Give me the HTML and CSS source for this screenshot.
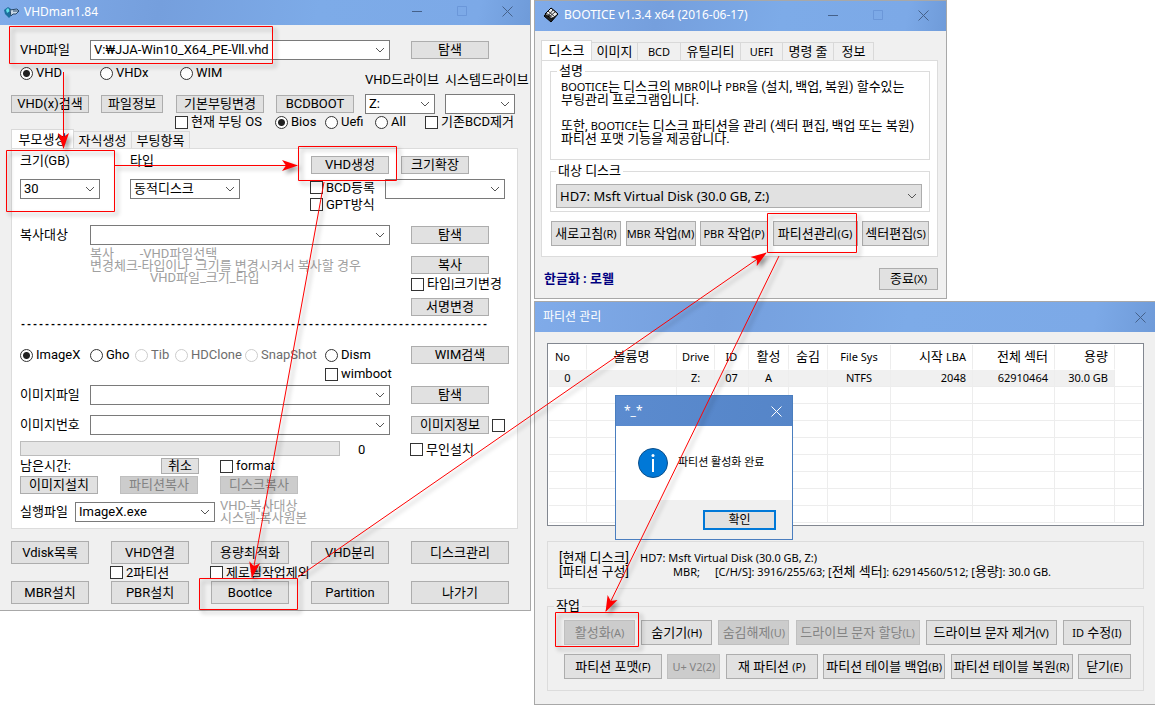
FILE: index.html
```html
<!DOCTYPE html>
<html lang="ko">
<head>
<meta charset="utf-8">
<title>VHDman1.84</title>
<link rel="stylesheet" href="styles.css">
</head>
<body>
<main class="desktop">

<section class="window vhdman">
  <header class="titlebar">
    <svg class="app-icon" width="16" height="14" viewBox="0 0 16 14"><path d="M0 5 4 2l3 2 1 6-3 3-4-4z" fill="#1d6f9e"/><path d="m2 5 2-2 2 3-3 2z" fill="#5fe0e8"/><path d="m6 5 7-1 2 2-3 3-3 0-2 2z" fill="#c9d9e8" stroke="#27486b"/><path d="m9 6 5 0" stroke="#27486b"/></svg>
    <h1>VHDman1.84</h1>
    <div class="win-controls">
      <button aria-label="최소화"><svg width="11" height="11"><path d="M0 5.500h10"/></svg></button>
      <button aria-label="최대화" disabled><svg width="11" height="11"><path d="M.5.5h9v9h-9z"/></svg></button>
      <button aria-label="닫기"><svg width="11" height="11"><path d="m.5.5 10 10m0-10-10 10"/></svg></button>
    </div>
  </header>

  <div class="vhd-body">
    <div class="row row-file">
      <label for="vhdfile">VHD파일</label>
      <select id="vhdfile" class="w300"><option>V:₩JJA-Win10_X64_PE-Ⅶ.vhd</option></select>
      <button class="btn">탐색</button>
    </div>
    <div class="row row-type">
      <label class="opt"><input type="radio" name="type" checked>VHD</label>
      <label class="opt"><input type="radio" name="type">VHDx</label>
      <label class="opt"><input type="radio" name="type">WIM</label>
      <label class="low" for="vdrive">VHD드라이브</label>
      <label class="low" for="sdrive">시스템드라이브</label>
    </div>
    <div class="row row-tools">
      <button class="btn">VHD(x)검색</button>
      <button class="btn w62">파일정보</button>
      <button class="btn w88">기본부팅변경</button>
      <button class="btn">BCDBOOT</button>
      <select id="vdrive" class="w70"><option>Z:</option></select>
      <select id="sdrive" class="w70"><option></option></select>
    </div>
    <div class="row row-boot">
      <label class="opt"><input type="checkbox">현재 부팅 OS</label>
      <label class="opt"><input type="radio" name="boot" checked>Bios</label>
      <label class="opt"><input type="radio" name="boot">Uefi</label>
      <label class="opt"><input type="radio" name="boot">All</label>
      <label class="opt"><input type="checkbox">기존BCD제거</label>
    </div>

    <nav class="tabs small-tabs">
      <button class="tab active">부모생성</button><button class="tab">자식생성</button><button class="tab">부팅항목</button>
    </nav>
    <div class="panel vhd-panel">
      <div class="row row-size">
        <label for="size">크기(GB)</label>
        <label for="disktype">타입</label>
        <button class="btn">VHD생성</button>
        <button class="btn w68">크기확장</button>
      </div>
      <div class="row row-create">
        <select id="size" class="w80"><option>30</option></select>
        <select id="disktype" class="w110"><option>동적디스크</option></select>
        <div class="checks">
          <label class="opt"><input type="checkbox">BCD등록</label>
          <label class="opt"><input type="checkbox">GPT방식</label>
        </div>
        <select aria-label="BCD" class="w120"><option></option></select>
      </div>
      <div class="row row-field row-copy">
        <label for="copy">복사대상</label>
        <select id="copy" class="w300"><option></option></select>
        <button class="btn">탐색</button>
      </div>
      <div class="row row-hint">
        <p class="hint">복사&nbsp;&nbsp;&nbsp;&nbsp;&nbsp;&nbsp;&nbsp; -VHD파일선택<br>변경체크-타입이나&nbsp; 크기를 변경시켜서 복사할 경우<br><span class="hint-third">VHD파일_크기_타입</span></p>
        <div class="side">
          <button class="btn">복사</button>
          <label class="opt"><input type="checkbox">타입|크기변경</label>
          <button class="btn">서명변경</button>
        </div>
      </div>
      <p class="dashes">------------------------------------------------------------------------------</p>
      <div class="row row-format">
        <label class="opt"><input type="radio" name="fmt" checked>ImageX</label>
        <label class="opt"><input type="radio" name="fmt">Gho</label>
        <label class="opt off"><input type="radio" name="fmt" disabled>Tib</label>
        <label class="opt off"><input type="radio" name="fmt" disabled>HDClone</label>
        <label class="opt off"><input type="radio" name="fmt" disabled>SnapShot</label>
        <label class="opt"><input type="radio" name="fmt">Dism</label>
        <button class="btn w98">WIM검색</button>
      </div>
      <div class="row row-wimboot"><label class="opt"><input type="checkbox">wimboot</label></div>
      <div class="row row-field row-image">
        <label for="image">이미지파일</label>
        <select id="image" class="w300"><option></option></select>
        <button class="btn">탐색</button>
      </div>
      <div class="row row-field row-index">
        <label for="index">이미지번호</label>
        <select id="index" class="w300"><option></option></select>
        <button class="btn">이미지정보</button>
        <input type="checkbox" aria-label="이미지정보">
      </div>
      <div class="row row-progress">
        <div class="progress" role="progressbar" aria-label="진행"></div>
        <span>0</span>
        <label class="opt"><input type="checkbox">무인설치</label>
      </div>
      <div class="row row-time">
        <span>남은시간:</span>
        <button class="btn w38">취소</button>
        <label class="opt"><input type="checkbox">format</label>
      </div>
      <div class="row row-install">
        <button class="btn">이미지설치</button>
        <button class="btn" disabled>파티션복사</button>
        <button class="btn" disabled>디스크복사</button>
      </div>
      <div class="row row-exe">
        <label for="exe">실행파일</label>
        <select id="exe" class="w140"><option>ImageX.exe</option></select>
        <p class="hint">VHD-복사대상<br>시스템-복사원본</p>
      </div>
    </div>

    <div class="row row-bottom">
      <button class="btn tall">Vdisk목록</button>
      <button class="btn tall">VHD연결</button>
      <button class="btn tall">용량최적화</button>
      <button class="btn tall">VHD분리</button>
      <button class="btn tall w98">디스크관리</button>
    </div>
    <div class="row row-bottom-checks">
      <label class="opt"><input type="checkbox">2파티션</label>
      <label class="opt"><input type="checkbox">제로필작업제외</label>
    </div>
    <div class="row row-bottom-last">
      <button class="btn tall">MBR설치</button>
      <button class="btn tall">PBR설치</button>
      <button class="btn tall">BootIce</button>
      <button class="btn tall">Partition</button>
      <button class="btn tall w98">나가기</button>
    </div>
  </div>
</section>

<div class="right-side">
  <section class="window bootice">
    <header class="titlebar">
      <svg class="app-icon" width="16" height="16" viewBox="0 0 16 16"><path d="m8 1 7 6-7 8-7-6z" fill="#222" stroke="#000"/><path d="m8 1 7 6-6 5-7-5z" fill="#eee" stroke="#000"/><path d="m5 4 7 6M3 6l7 5M10 3 5 9m7-4-6 5" stroke="#333"/></svg>
      <h1>BOOTICE v1.3.4 x64 (2016-06-17)</h1>
      <div class="win-controls">
        <button aria-label="최소화"><svg width="11" height="11"><path d="M0 5.500h10"/></svg></button>
        <button aria-label="최대화" disabled><svg width="11" height="11"><path d="M.5.5h9v9h-9z"/></svg></button>
        <button aria-label="닫기"><svg width="11" height="11"><path d="m.5.5 10 10m0-10-10 10"/></svg></button>
      </div>
    </header>
    <div class="bootice-body">
      <nav class="tabs big-tabs">
        <button class="tab active">디스크</button><button class="tab t46">이미지</button><button class="tab t43 lat">BCD</button><button class="tab t60">유틸리티</button><button class="tab t42 lat">UEFI</button><button class="tab t51">명령 줄</button><button class="tab t40">정보</button>
      </nav>
      <div class="panel bootice-panel">
        <fieldset class="about">
          <legend>설명</legend>
          <p><span class="lat">BOOTICE</span>는 디스크의 <span class="lat">MBR</span>이나 <span class="lat">PBR</span>을 (설치, 백업, 복원) 할수있는<br>부팅관리 프로그램입니다.<br><br>또한, <span class="lat">BOOTICE</span>는 디스크 파티션을 관리 (섹터 편집, 백업 또는 복원)<br>파티션 포맷 기능을 제공합니다.</p>
        </fieldset>
        <fieldset class="target">
          <legend>대상 디스크</legend>
          <select aria-label="대상 디스크" class="disk"><option>HD7: Msft Virtual Disk (30.0 GB, Z:)</option></select>
        </fieldset>
        <div class="actions">
          <button class="btn w70">새로고침<span class="lat">(R)</span></button>
          <button class="btn w70"><span class="lat">MBR</span> 작업<span class="lat">(M)</span></button>
          <button class="btn w68"><span class="lat">PBR</span> 작업<span class="lat">(P)</span></button>
          <button class="btn w85">파티션관리<span class="lat">(G)</span></button>
          <button class="btn w67">섹터편집<span class="lat">(S)</span></button>
        </div>
      </div>
      <footer class="bootice-foot">
        <strong>한글화 : 로웰</strong>
        <button class="btn w59">종료<span class="lat">(X)</span></button>
      </footer>
    </div>
  </section>

  <section class="window partman">
    <header class="titlebar">
      <h1>파티션 관리</h1>
      <div class="win-controls"><button aria-label="닫기"><svg width="11" height="11"><path d="m.5.5 10 10m0-10-10 10"/></svg></button></div>
    </header>
    <div class="part-body">
      <div class="list">
        <table>
          <colgroup><col class="c38"><col class="c90"><col class="c38"><col class="c34"><col class="c40"><col class="c39"><col class="c63"><col class="c82"><col class="c82"><col class="c60"><col></colgroup>
          <thead><tr><th class="left lat">No</th><th>볼륨명</th><th class="lat">Drive</th><th class="lat">ID</th><th>활성</th><th>숨김</th><th class="lat">File Sys</th><th class="right">시작 <span class="lat">LBA</span></th><th class="right">전체 섹터</th><th class="right">용량</th><th></th></tr></thead>
          <tbody>
            <tr class="selected lat"><td>0</td><td></td><td>Z:</td><td>07</td><td>A</td><td></td><td>NTFS</td><td class="right">2048</td><td class="right">62910464</td><td class="right">30.0 GB</td><td></td></tr>
            <tr><td></td><td></td><td></td><td></td><td></td><td></td><td></td><td></td><td></td><td></td><td></td></tr>
            <tr><td></td><td></td><td></td><td></td><td></td><td></td><td></td><td></td><td></td><td></td><td></td></tr>
            <tr><td></td><td></td><td></td><td></td><td></td><td></td><td></td><td></td><td></td><td></td><td></td></tr>
            <tr><td></td><td></td><td></td><td></td><td></td><td></td><td></td><td></td><td></td><td></td><td></td></tr>
            <tr><td></td><td></td><td></td><td></td><td></td><td></td><td></td><td></td><td></td><td></td><td></td></tr>
            <tr><td></td><td></td><td></td><td></td><td></td><td></td><td></td><td></td><td></td><td></td><td></td></tr>
            <tr><td></td><td></td><td></td><td></td><td></td><td></td><td></td><td></td><td></td><td></td><td></td></tr>
            <tr><td></td><td></td><td></td><td></td><td></td><td></td><td></td><td></td><td></td><td></td><td></td></tr>
          </tbody>
        </table>
      </div>
      <div class="info">
        <span>[현재 디스크]</span><span class="lat wide">HD7: Msft Virtual Disk (30.0 GB, Z:)</span>
        <span>[파티션 구성]</span><span></span><span class="lat">MBR;</span><span><span class="lat">[C/H/S]: 3916/255/63; [</span>전체 섹터<span class="lat">]: 62914560/512; [</span>용량<span class="lat">]: 30.0 GB.</span></span>
      </div>
      <fieldset class="work">
        <legend>작업</legend>
        <div class="work-row">
          <button class="btn w71" disabled>활성화<span class="lat">(A)</span></button>
          <button class="btn w71">숨기기<span class="lat">(H)</span></button>
          <button class="btn w71" disabled>숨김해제<span class="lat">(U)</span></button>
          <button class="btn w124" disabled>드라이브 문자 할당<span class="lat">(L)</span></button>
          <button class="btn w131">드라이브 문자 제거<span class="lat">(V)</span></button>
          <button class="btn w68"><span class="lat">ID</span> 수정<span class="lat">(I)</span></button>
        </div>
        <div class="work-row">
          <button class="btn w98">파티션 포맷<span class="lat">(F)</span></button>
          <button class="btn w53 lat" disabled>U+ V2(2)</button>
          <button class="btn w92">재 파티션 <span class="lat">(P)</span></button>
          <button class="btn w122">파티션 테이블 백업<span class="lat">(B)</span></button>
          <button class="btn w122">파티션 테이블 복원<span class="lat">(R)</span></button>
          <button class="btn w53">닫기<span class="lat">(E)</span></button>
        </div>
      </fieldset>
    </div>
  </section>
</div>

<section class="dialog" role="dialog" aria-label="*_*">
  <header class="titlebar">
    <h2>*_*</h2>
    <div class="win-controls"><button aria-label="닫기"><svg width="11" height="11"><path d="m.5.5 10 10m0-10-10 10"/></svg></button></div>
  </header>
  <div class="message">
    <svg width="30" height="30" viewBox="0 0 30 30"><circle cx="15" cy="15" r="14.500" fill="#0078d7" stroke="#0c4f8a"/><path d="M15 11v13" stroke="#fff" stroke-width="2"/><circle cx="15" cy="7.500" r="1.500" fill="#fff"/></svg>
    <p>파티션 활성화 완료</p>
  </div>
  <footer><button class="btn ok">확인</button></footer>
</section>

<svg class="notes" viewBox="0 0 1155 706" preserveAspectRatio="none">
  <defs><marker id="head" viewBox="0 0 16 12" refX="15" refY="6" markerWidth="16" markerHeight="12" markerUnits="userSpaceOnUse" orient="auto"><path class="tip" d="M0 .5 16 6 0 11.500 4 6z"/></marker></defs>
  <path d="M9.500 26.500h263v37h-263zM6.500 150.500h108v61h-108zM298.500 146.500h98v34h-98zM199.500 578.500h98v31h-98zM767.500 213.500h89v39h-89zM555.500 612.500h83v34h-83z"/>
  <g>
    <path marker-end="url(#head)" d="M63.500 72v76"/>
    <path marker-end="url(#head)" d="M115 165.500h182"/>
    <path marker-end="url(#head)" d="m324 182-72 395"/>
    <path marker-end="url(#head)" d="M298 577 766 253"/>
    <path marker-end="url(#head)" d="M779 256 606 611"/>
  </g>
</svg>
</main>
</body>
</html>
```
FILE: styles.css
```css
* { box-sizing: border-box; }

body {
  margin: 0;
  background: #fff;
  color: #000;
  font: 13px/16px Roboto, "Noto Sans CJK KR", sans-serif;
}

h1, h2, p { margin: 0; font: inherit; }
button, select { font: inherit; color: inherit; margin: 0; }

.desktop {
  position: relative;
  display: grid;
  grid-template-columns: minmax(0, 531fr) minmax(0, 621fr);
  gap: 3px;
  align-items: start;
  min-width: 1155px;
}

.right-side { display: flex; flex-direction: column; gap: 2px; }
.lat { font-family: "Noto Sans", "Noto Sans CJK KR", sans-serif; font-size: 11px; }

/* windows */
.window { background: #f0f0f0; border: 1px solid #a8a8a8; }
.vhdman { border-width: 0 1px 1px 0; }
.bootice { width: 413px; }
.partman { border-right: 0; }

.titlebar {
  display: flex;
  align-items: center;
  gap: 5px;
  height: 30px;
  padding: 0 9px 0 8px;
  background: linear-gradient(100deg, #80abe9 0%, #759fdd 30%, #7dabe8 60%, #7ca9e7 90%, #6f9bd9 100%);
  color: #fff;
  font: 12px/16px "Noto Sans", "Noto Sans CJK KR", sans-serif;
}
.vhdman .titlebar { height: 25px; padding: 0 17px 2px 4px; gap: 4px; }
.bootice .titlebar { padding-bottom: 2px; padding-right: 17px; }
.titlebar h1, .titlebar h2 { flex: 1; }
.win-controls { display: flex; gap: 34px; color: #45618a; }
.win-controls button {
  display: flex;
  padding: 0;
  border: 0;
  background: none;
  color: inherit;
}
.win-controls button:disabled { color: #6b97d9; }
.win-controls path { fill: none; stroke: currentColor; }

/* controls */
.btn {
  display: block;
  width: 78px;
  height: 18px;
  padding: 0;
  border: 1px solid #adadad;
  background: #e1e1e1;
  line-height: 14px;
  white-space: nowrap;
  text-align: center;
}
.btn:disabled { background: #ccc; border-color: #bfbfbf; color: #838383; }
.btn.tall { height: 23px; }

select {
  appearance: none;
  width: 100%;
  height: 20px;
  padding: 0 18px 0 3px;
  border: 1px solid #7a7a7a;
  border-radius: 0;
  background: #fff url("data:image/svg+xml,%3Csvg xmlns='http://www.w3.org/2000/svg' width='10' height='6'%3E%3Cpath d='m1 1 4 4 4-4' fill='none' stroke='%23555'/%3E%3C/svg%3E") no-repeat right 4px center;
  line-height: 16px;
}

input { appearance: none; margin: 0; width: 13px; height: 13px; flex: none; background: #fff; border: 1px solid #333; }
input[type="radio"] { border-radius: 50%; }
input[type="radio"]:checked { background: radial-gradient(circle, #222 0 3px, #fff 4px); }
input:disabled { border-color: #ccc; }
.opt { display: flex; align-items: center; gap: 3px; white-space: nowrap; }
.off { color: #6d6d6d; }

.btn.w38 { width: 38px; height: 16px; }
.btn.w53 { width: 53px; }
.btn.w59 { width: 59px; }
.btn.w62 { width: 62px; }
.btn.w67 { width: 67px; }
.btn.w68 { width: 68px; }
.w70, .btn.w70 { width: 70px; }
.btn.w71 { width: 71px; }
.w80 { width: 80px; }
.btn.w85 { width: 85px; }
.btn.w88 { width: 88px; }
.btn.w92 { width: 92px; }
.btn.w98 { width: 98px; }
.w110 { width: 110px; }
.w120 { width: 120px; }
.btn.w122 { width: 122px; }
.btn.w124 { width: 124px; }
.btn.w131 { width: 131px; }
.w140 { width: 140px; }
.w300 { width: 300px; }

/* tabs */
.tabs { display: flex; align-items: flex-end; }
.tab {
  width: 58px;
  height: 17px;
  padding: 0;
  border: 1px solid #d9d9d9;
  border-width: 1px 1px 0 0;
  background: #f0f0f0;
  line-height: 15px;
  white-space: nowrap;
}
.tab.active { background: #fff; border-left-width: 1px; }
.small-tabs .active { width: 63px; height: 19px; }
.big-tabs .tab { height: 18px; }
.big-tabs .active { width: 51px; height: 20px; }
.big-tabs .t40 { width: 40px; }
.big-tabs .t42 { width: 42px; }
.big-tabs .t43 { width: 43px; }
.big-tabs .t46 { width: 46px; }
.big-tabs .t51 { width: 51px; }
.big-tabs .t60 { width: 60px; }
.panel { border: 1px solid #dcdcdc; background: #fff; }

/* VHDman */
.vhd-body { padding: 15px 12px 6px 11px; }
.row { display: grid; align-items: center; white-space: nowrap; }
.row-file { grid-template-columns: 70px 321px auto; padding-left: 9px; height: 20px; }
.row-type { grid-template-columns: 80px 80px 185px 80px auto; align-items: start; padding-left: 9px; height: 22px; margin-top: 5px; }
.row-type .low { align-self: end; line-height: 14px; }
.row-tools { grid-template-columns: 90px 75px 100px 89px 80px auto; height: 20px; margin-top: 7px; }
.row-boot { grid-template-columns: 100px 50px 50px 50px auto; height: 15px; padding-left: 164px; }
.vhd-panel { padding: 6px 0 4px 8px; }
.row-size { grid-template-columns: 110px 181px 90px auto; height: 20px; }
.row-size label { align-self: start; line-height: 12px; }
.row-create { grid-template-columns: 110px 180px 75px auto; align-items: start; height: 34px; margin-top: 4px; }
.checks .opt { height: 17px; }
.row-field { grid-template-columns: 70px 321px 81px auto; height: 20px; }
.row-copy { margin-top: 12px; }
.row-hint { grid-template-columns: 321px auto; align-items: start; padding-left: 70px; height: 75px; }
.hint { color: #a0a0a0; line-height: 12px; }
.row-hint .hint { padding-top: 3px; }
.hint-third { padding-left: 60px; }
.side { display: grid; padding-top: 11px; }
.side .opt { margin: 2px 0 6px; }
.dashes { height: 10px; overflow: hidden; font: bold 10px/10px "Liberation Mono", monospace; }
.row-format { grid-template-columns: 70px 45px 40px 70px 80px 86px auto; height: 20px; margin-top: 15px; }
.row-wimboot { height: 18px; padding-left: 305px; }
.row-image { margin-top: 2px; }
.row-index { margin-top: 10px; }
.row-progress { grid-template-columns: 338px 52px auto; height: 17px; margin-top: 6px; }
.progress { width: 320px; height: 15px; border: 1px solid #bcbcbc; background: #e6e6e6; align-self: start; }
.row-time { grid-template-columns: 141px 59px auto; height: 16px; }
.row-install { grid-template-columns: 100px 100px auto; height: 18px; margin-top: 2px; }
.row-exe { grid-template-columns: 55px 145px auto; height: 24px; margin-top: 6px; }
.row-bottom, .row-bottom-last { grid-template-columns: repeat(4, 100px) auto; height: 23px; }
.row-bottom { margin-top: 12px; }
.row-bottom-checks { grid-template-columns: 100px auto; height: 17px; padding-left: 99px; }

/* BOOTICE */
.bootice-body { padding: 9px 8px 8px 6px; }
.bootice .btn { height: 25px; line-height: 20px; }
.bootice-panel { padding: 3px 7px 10px 8px; }
fieldset { margin: 0; min-width: 0; padding: 0 8px; border: 1px solid #dcdcdc; }
legend { padding: 0 2px; line-height: 14px; }
.about { padding: 2px 10px 14px; white-space: nowrap; }
.about p { line-height: 13px; }
.about legend { margin-left: -4px; }
.target { margin-top: 4px; padding: 6px 7px 3px 5px; }
.disk { display: block; height: 24px; border-color: #adadad; background-color: #e1e1e1; font-family: "Noto Sans", sans-serif; }
.actions { display: flex; justify-content: space-between; margin-top: 9px; padding: 0 1px; }
.bootice-foot { display: flex; justify-content: space-between; align-items: center; padding: 11px 0 0 3px; }
.bootice-foot strong { color: #000080; }
.bootice .btn.w59 { height: 22px; }

/* partition manager */
.part-body { padding: 11px 11px 13px 12px; }
.list { padding: 1px 1px 2px; border: 1px solid #828790; background: #fff; }
table { width: 100%; table-layout: fixed; border-collapse: separate; border-spacing: 0; }
th, td { height: 17px; padding: 0; border: solid #ededed; border-width: 0 1px 1px 0; line-height: 16px; text-align: center; font-weight: normal; white-space: nowrap; }
th { height: 25px; border-bottom-color: #fff; }
th:last-child, td:last-child { border-right: 0; }
.left { text-align: left; padding-left: 6px; }
.right { text-align: right; padding-right: 6px; }
.selected td { background: #f0f0f0; }
.selected td:last-child { background: #fff; }
.c34 { width: 34px; }
.c38 { width: 38px; }
.c39 { width: 39px; }
.c40 { width: 40px; }
.c60 { width: 60px; }
.c63 { width: 63px; }
.c82 { width: 82px; }
.c90 { width: 90px; }
.info { display: grid; grid-template-columns: 81px 33px 42px auto; margin-top: 15px; padding: 9px 11px; border: 1px solid #dcdcdc; line-height: 14px; white-space: nowrap; }
.info > span { height: 14px; }
.wide { grid-column: 2 / -1; }
.work { display: grid; gap: 9px; margin-top: 10px; padding: 7px 12px 11px 16px; }
.work legend { margin-left: -10px; }
.work-row { display: flex; justify-content: space-between; }
.work .btn { height: 25px; line-height: 20px; }

/* message box */
.dialog { position: absolute; left: 615px; top: 395px; width: 178px; border: 1px solid #4a7ebf; background: #fff; }
.dialog .titlebar { height: 30px; padding: 0 10px 0 8px; background: linear-gradient(100deg, #5b8bcf, #5585c8); }
.dialog .win-controls { color: #fff; }
.message { display: flex; align-items: center; gap: 10px; height: 74px; padding-left: 22px; white-space: nowrap; font-size: 11px; }
.dialog footer { display: flex; justify-content: flex-end; padding: 10px 16px 9px; background: #f0f0f0; }
.btn.ok { width: 73px; height: 20px; border: 2px solid #0078d7; font-size: 12px; }

/* arrows and frames */
.notes { position: absolute; left: 0; top: 0; width: 100%; height: 706px; pointer-events: none; filter: drop-shadow(3px 3px 2px rgba(0, 0, 0, .4)); }
.notes path { fill: none; stroke: #f00; stroke-width: 1; }
.notes .tip { fill: #f00; stroke: none; }
```
